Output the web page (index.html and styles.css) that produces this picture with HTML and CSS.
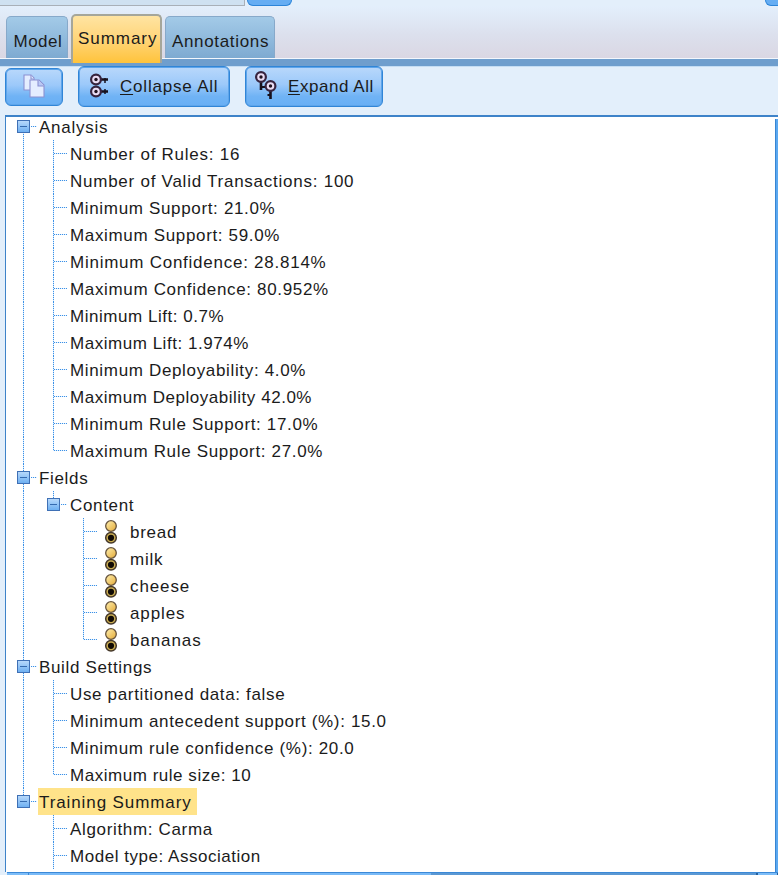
FILE: index.html
```html
<!DOCTYPE html>
<html lang="en">
<head>
<meta charset="utf-8">
<title>Model Summary</title>
<link rel="stylesheet" href="styles.css">
</head>
<body>
<svg width="0" height="0" class="defs" aria-hidden="true">
  <defs>
    <linearGradient id="gold" x1="0" y1="0" x2="1" y2="1"><stop offset="0" stop-color="#fff0b0"/><stop offset="1" stop-color="#e3a936"/></linearGradient>
    <g id="ring"><circle cx="6" cy="6" r="4.9" fill="#eadcf4" stroke="#37243f" stroke-width="2.2"/><circle cx="6" cy="6" r="1.7" fill="#20121f"/></g>
    <g id="flag"><circle cx="7" cy="6" r="5.3" fill="url(#gold)" stroke="#66533c" stroke-width="1.3"/><circle cx="7" cy="17.8" r="5.3" fill="#c9ac50" stroke="#44372a" stroke-width="1.5"/><circle cx="7" cy="17.8" r="3.1" fill="#100a04"/></g>
  </defs>
</svg>
<div class="window">
  <header class="top"><div class="field"></div><div class="stub"></div><div class="stub right"></div></header>
  <nav class="tabs">
    <div class="tab model"><span>Model</span></div>
    <div class="tab active"><span>Summary</span></div>
    <div class="tab annotations"><span>Annotations</span></div>
  </nav>
  <div class="rule"></div>
  <div class="toolbar">
    <button class="button copy" aria-label="Copy"><svg width="24" height="26" viewBox="0 0 24 26"><g fill="#e4edff" stroke="#8c91d2" stroke-width="1.1"><path d="M2 2h7l3 3v12H2z"/><path d="M9 2v4h3"/><path d="M8 7h9l5 5v12H8z"/><path d="M16 7v6h6" fill="#b9c8f5"/></g></svg></button>
    <button class="button collapse"><svg width="20" height="26" viewBox="0 0 20 26"><path d="M11 6.5h8M11 18.5h8" stroke="#17101c" stroke-width="2.4"/><path d="M16 5v5M16 16v5" stroke="#17101c" stroke-width="1.5"/><use href="#ring" x="1" y="0.5"/><use href="#ring" x="1" y="12.5"/></svg><span><u>C</u>ollapse All</span></button>
    <button class="button expand"><svg width="24" height="30" viewBox="0 0 24 30"><path d="M7 10v9M16.5 19v9" stroke="#17101c" stroke-width="2.6"/><path d="M7 16h4M13.5 24h3" stroke="#17101c" stroke-width="2"/><use href="#ring" x="1" y="0"/><use href="#ring" x="10.5" y="9"/></svg><span><u>E</u>xpand All</span></button>
  </div>
  <main class="pane">
    <div class="tree">
      <div class="row"><i class="node first"></i><span class="label wide">Analysis</span></div>
      <div class="row"><i class="line"></i><i class="branch"></i><span class="label wide">Number of Rules: 16</span></div>
      <div class="row"><i class="line"></i><i class="branch"></i><span class="label wide">Number of Valid Transactions: 100</span></div>
      <div class="row"><i class="line"></i><i class="branch"></i><span class="label">Minimum Support: 21.0%</span></div>
      <div class="row"><i class="line"></i><i class="branch"></i><span class="label">Maximum Support: 59.0%</span></div>
      <div class="row"><i class="line"></i><i class="branch"></i><span class="label wide">Minimum Confidence: 28.814%</span></div>
      <div class="row"><i class="line"></i><i class="branch"></i><span class="label">Maximum Confidence: 80.952%</span></div>
      <div class="row"><i class="line"></i><i class="branch"></i><span class="label snug">Minimum Lift: 0.7%</span></div>
      <div class="row"><i class="line"></i><i class="branch"></i><span class="label snug">Maximum Lift: 1.974%</span></div>
      <div class="row"><i class="line"></i><i class="branch"></i><span class="label">Minimum Deployability: 4.0%</span></div>
      <div class="row"><i class="line"></i><i class="branch"></i><span class="label snug">Maximum Deployability 42.0%</span></div>
      <div class="row"><i class="line"></i><i class="branch"></i><span class="label">Minimum Rule Support: 17.0%</span></div>
      <div class="row"><i class="line"></i><i class="branch last"></i><span class="label">Maximum Rule Support: 27.0%</span></div>
      <div class="row"><i class="node"></i><span class="label">Fields</span></div>
      <div class="row"><i class="line"></i><i class="node last"></i><span class="label">Content</span></div>
      <div class="row"><i class="line"></i><i class="gap"></i><i class="branch"></i><svg class="flag" viewBox="0 0 14 24"><use href="#flag"/></svg><span class="label wide">bread</span></div>
      <div class="row"><i class="line"></i><i class="gap"></i><i class="branch"></i><svg class="flag" viewBox="0 0 14 24"><use href="#flag"/></svg><span class="label wide">milk</span></div>
      <div class="row"><i class="line"></i><i class="gap"></i><i class="branch"></i><svg class="flag" viewBox="0 0 14 24"><use href="#flag"/></svg><span class="label broad">cheese</span></div>
      <div class="row"><i class="line"></i><i class="gap"></i><i class="branch"></i><svg class="flag" viewBox="0 0 14 24"><use href="#flag"/></svg><span class="label broad">apples</span></div>
      <div class="row"><i class="line"></i><i class="gap"></i><i class="branch last"></i><svg class="flag" viewBox="0 0 14 24"><use href="#flag"/></svg><span class="label broad">bananas</span></div>
      <div class="row"><i class="node"></i><span class="label">Build Settings</span></div>
      <div class="row"><i class="line"></i><i class="branch"></i><span class="label">Use partitioned data: false</span></div>
      <div class="row"><i class="line"></i><i class="branch"></i><span class="label">Minimum antecedent support (%): 15.0</span></div>
      <div class="row"><i class="line"></i><i class="branch"></i><span class="label">Minimum rule confidence (%): 20.0</span></div>
      <div class="row"><i class="line"></i><i class="branch last"></i><span class="label snug">Maximum rule size: 10</span></div>
      <div class="row"><i class="node last"></i><span class="label selected broad">Training Summary</span></div>
      <div class="row"><i class="gap"></i><i class="branch"></i><span class="label">Algorithm: Carma</span></div>
      <div class="row"><i class="gap"></i><i class="branch"></i><span class="label snug">Model type: Association</span></div>
    </div>
    <div class="vscroll"></div>
  </main>
  <footer class="hscroll"><div class="arrow"></div><div class="track"></div><div class="thumb"></div><div class="arrow end"></div></footer>
</div>
</body>
</html>
```
FILE: styles.css
```css
*, *::before { box-sizing: border-box; }
body { margin: 0; overflow: hidden; font: 17px/27px "Liberation Sans", Arial, sans-serif; color: #1b1b1b; letter-spacing: .66px; }
.defs { display: block; position: absolute; }
.window { width: 778px; height: 875px; overflow: hidden; display: flex; flex-direction: column; background: #e3effb; }
.top { height: 6px; flex: none; display: flex; background: #e3effb; }
.field { width: 245px; background: #cfe1f1; border: solid #a9b0b8; border-width: 0 1px 1px 0; }
.stub { width: 45px; margin-left: 2px; background: #65adf3; border: 1px solid #2c84d8; border-top: 0; border-radius: 0 0 7px 7px; }
.stub.right { margin-left: auto; width: 14px; margin-right: -1px; border-radius: 0 0 0 7px; }
.tabs { height: 52px; flex: none; display: flex; align-items: flex-end; padding-left: 6px; background: linear-gradient(#e3effc, #dce0ed 55%, #dad7e3); }
.tab { height: 42px; border: 1px solid #87a9ca; border-bottom: 0; border-radius: 5px 5px 0 0; background: linear-gradient(#a3cae7, #8fb9dc 55%, #7eaad1); display: flex; line-height: 50px; white-space: nowrap; }
.model { width: 62px; padding-left: 6.5px; letter-spacing: .5px; }
.annotations { width: 110px; margin-left: 3px; padding-left: 6px; }
.active { width: 91px; height: 49px; margin: 0 0 -5px 3px; padding-left: 5px; border: 2px solid #a5a69a; border-bottom: 0; background: linear-gradient(#ffe4a2, #ffd579 50%, #ffc33b); z-index: 1; line-height: 46px; letter-spacing: .95px; }
.rule { height: 8px; flex: none; background: #6f9ecd; border-top: 1px solid #f3f7fd; }
.toolbar { height: 49px; flex: none; display: flex; align-items: flex-start; padding-left: 5px; border-top: 1px solid #c5ddf3; }
.button { height: 41px; border: 1px solid #3085d7; border-radius: 6px; box-shadow: inset 0 0 0 1px #5ea5ea; background: linear-gradient(#b9d8fb, #9cc9fa 45%, #70b3f5 75%, #68aff5); padding: 0; margin-top: -1px; display: flex; align-items: center; font: inherit; color: #1b1b1b; letter-spacing: .8px; white-space: nowrap; }
.button svg { margin-top: -2px; }
.button u { text-decoration-thickness: 1px; text-underline-offset: 2px; }
.copy { width: 58px; height: 38px; margin-top: 1px; justify-content: center; }
.collapse { width: 152px; margin-left: 15px; padding-left: 10px; gap: 11px; }
.expand { width: 138px; margin-left: 15px; padding-left: 8px; gap: 10px; letter-spacing: .55px; }
.pane { flex: 1; min-height: 0; margin-left: 5px; display: flex; background: #fff; border: solid #3e83c9; border-width: 2px 0 0 1px; overflow: hidden; }
.tree { flex: 1; margin: -4px 0 0 2px; }
.row { height: 27px; display: flex; align-items: center; white-space: nowrap; }
.row i { width: 30px; height: 27px; flex: none; --v: repeating-linear-gradient(#3c91e6 0 1px, #d5eaff 1px 2px); --h: repeating-linear-gradient(90deg, #3c91e6 0 1px, #e0f0ff 1px 2px); background-repeat: no-repeat; }
.row .line { background-image: var(--v); background-size: 1px 27px; background-position: 15px 0; }
.row .branch { background-image: var(--v), var(--h); background-size: 1px 27px, 13px 1px; background-position: 15px 0, 16px 13px; }
.row .branch.last { background-size: 1px 14px, 13px 1px; }
.row .node { display: flex; align-items: center; background-image: var(--v), var(--h); background-size: 1px 27px, 6px 1px; background-position: 15px 0, 23px 13px; }
.row .node.last { background-size: 1px 14px, 6px 1px; }
.row .node.first { background-size: 1px 14px, 6px 1px; background-position: 15px 13px, 23px 13px; }
.node::before { content: ""; width: 13px; height: 13px; margin-left: 9px; border: 1px solid #3f70b5; background: linear-gradient(#356bb0, #356bb0) center / 7px 1px no-repeat, linear-gradient(#b6d8fb, #6eb0f2); }
.label { padding-left: 1px; height: 27px; line-height: 29px; letter-spacing: .66px; }
.branch + .label, .node.last + .label:not(.selected) { margin-left: 1px; }
.snug { letter-spacing: .53px; }
.wide { letter-spacing: .75px; }
.broad { letter-spacing: .9px; }
.selected { background: #ffe38a; padding-right: 5px; }
.flag { width: 14px; height: 24px; margin-left: 6px; margin-right: 11px; }
.vscroll { width: 3px; margin-top: 2px; background: #5ba8f0; border-left: 1px solid #3885d2; }
.hscroll { height: 3px; flex: none; margin-left: 7px; display: flex; background: #6db4f7; border-top: 1px solid #3b89d8; }
.arrow { width: 22px; border-right: 1px solid #3b89d8; background: #7dbdf8; }
.track { width: 402px; background: #79baf7; }
.thumb { flex: 1; background: #5b98d3; }
.arrow.end { border-left: 2px solid #245f9b; border-right: 1px solid #245f9b; }
```
